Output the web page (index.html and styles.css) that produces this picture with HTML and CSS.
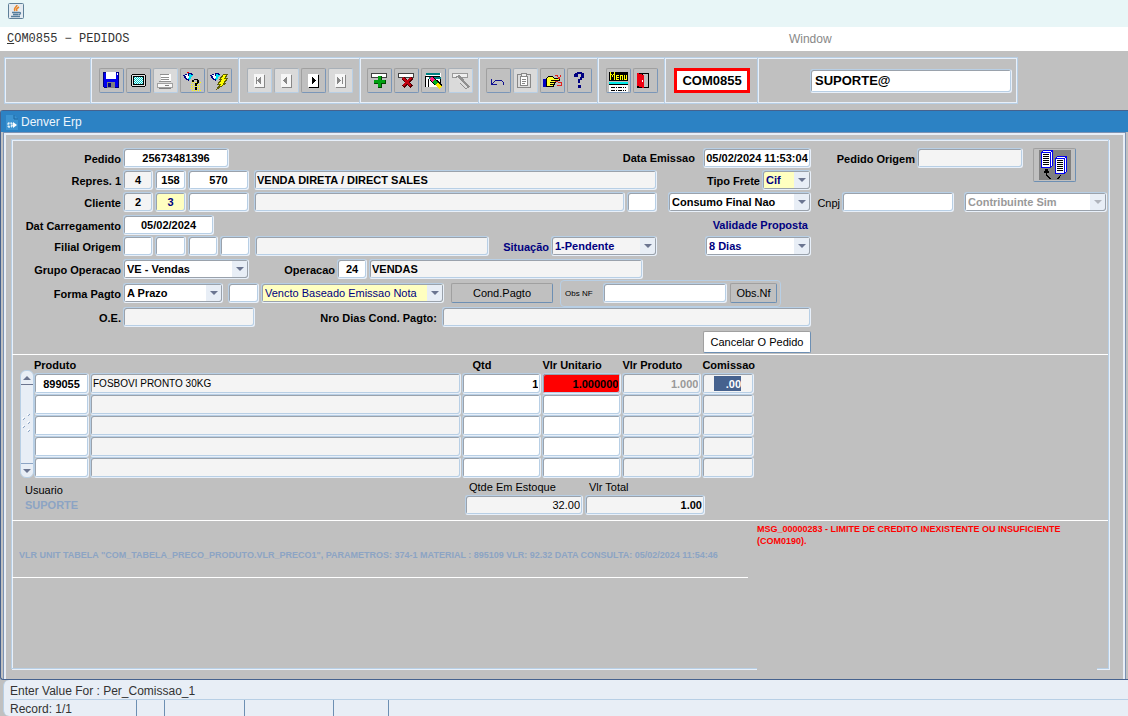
FILE: index.html
```
<!DOCTYPE html>
<html lang="pt-BR">
<head>
  <meta charset="UTF-8" />
  <meta name="viewport" content="width=device-width, initial-scale=1.0"/>
  <title>COM0855 - PEDIDOS</title>
  <link rel="stylesheet" href="styles.css">
</head>
<body>
  <header class="app-bar">
    <svg class="java-icon" viewBox="0 0 16 16">
      <rect x="0.5" y="0.5" width="15" height="15" rx="1" fill="#e4ebf1" stroke="#5f8099"/>
      <path d="M9 2C9 4 5 5 7 8M11 4C8.500 5.500 8 6 9 8" fill="none" stroke="#e8852a" stroke-width="1.500"/>
      <path d="M4 9.500h7M5 11.500h5.500M3 13.500h9M11 9.500q3 0 0 2.500" fill="none" stroke="#557d9c" stroke-width="1.300"/>
    </svg>
  </header>
  <nav class="menu-bar">
    <a class="menu-title" href="#"><u>C</u>OM0855 − PEDIDOS</a>
    <a class="menu-window" href="#">Window</a>
  </nav>

  <div class="toolbar-wrap">
    <div class="toolbar">
      <div class="tool-group lead"></div>
      <div class="tool-group">
        <button class="tool" aria-label="Salvar">
          <svg viewBox="0 0 24 24">
            <path d="M4 3h16v16H5l-1-1z" fill="#0000f0"/><path d="M4.500 18V3.500h15v15H5" fill="none" stroke="#000080"/>
            <path d="M7 3h10v7H7z" fill="#fff"/><path d="M8 13h8v6H8z" fill="#808080"/><path d="M9 14h3v4H9z" fill="#000080"/><path d="M18 4h1v2h-1z" fill="#fff"/>
          </svg>
        </button>
        <button class="tool" aria-label="Tela">
          <svg viewBox="0 0 24 24">
            <path d="M6 5h13v1h1v11h-1v1H6v-1H5V6h1z" fill="#000"/><path d="M6 6h13v11H6z" fill="#e0e0e0"/><path d="M7 7h11v9H7z" fill="#000"/><path d="M8 8h9v7H8z" fill="#f0ffff"/>
            <path d="M8 8.500h9M8 10.500h9M8 12.500h9M8 14.500h9" stroke="#00c8c8" stroke-dasharray="1 1"/><path d="M9 9.500h8M9 11.500h8M9 13.500h8" stroke="#00c8c8" stroke-dasharray="1 1"/>
          </svg>
        </button>
        <button class="tool" disabled aria-label="Imprimir">
          <svg viewBox="0 0 24 24">
            <path d="M8 5h10v8H8z" fill="#fff"/><path d="M7 5.500h9M8 8.500h8M8 10.500h8M6 12.500h12" stroke="#909090"/>
            <path d="M4.500 14.500h15v4h-15z" fill="#f8f8f8" stroke="#a0a0a0"/><path d="M12 16.500h4M6 19.500h12" stroke="#808080"/>
          </svg>
        </button>
        <button class="tool" aria-label="Entrar consulta">
          <svg viewBox="0 0 24 24">
            <path d="M12 13.500h9M11 15.500h10M11 17.500h10M11 19.500h10M12 21.500h9" stroke="#ffff00" stroke-dasharray="1 1"/>
            <path d="M3 6l7-2 3 1-4 7-3-1z" fill="#000080"/><path d="M9 5l4 1-3 5-2-1z" fill="#00e0f0"/><path d="M5 6l3-1 1 4-2 1z" fill="#fff"/><path d="M7 3h2v1H7z" fill="#f00"/>
            <path d="M12 11h2v-1h4v1h1v3h-1v1h-1v2h-2v-3h2v-3h-3v2h-2zM15 18h2v3h-2z" fill="#000"/>
          </svg>
        </button>
        <button class="tool" aria-label="Executar consulta">
          <svg viewBox="0 0 24 24">
            <path d="M3 6l7-2 3 1-4 7-3-1z" fill="#000080"/><path d="M9 5l4 1-3 5-2-1z" fill="#00e0f0"/><path d="M5 6l3-1 1 4-2 1z" fill="#fff"/>
            <path d="M16.500 5.500h4l-3 4h3l-4 5h2l-9 6 4-5h-3l4-5h-2z" fill="#ffff00" stroke="#606000"/>
          </svg>
        </button>
      </div>
      <div class="tool-group">
        <button class="tool" disabled aria-label="Primeiro"><svg viewBox="0 0 24 24"><path d="M7 5h10v13H7z" fill="#f6f6f6"/><path d="M17.500 6v12.500H8" fill="none" stroke="#888"/><path d="M9 8h1v7H9zM14 8v7l-4-3v-1z" fill="#888"/></svg></button>
        <button class="tool" disabled aria-label="Anterior"><svg viewBox="0 0 24 24"><path d="M7 5h10v13H7z" fill="#f6f6f6"/><path d="M17.500 6v12.500H8" fill="none" stroke="#888"/><path d="M13 8v7l-4-3v-1z" fill="#888"/></svg></button>
        <button class="tool" aria-label="Proximo"><svg viewBox="0 0 24 24"><path d="M7 5h10v13H7z" fill="#fff"/><path d="M17.500 6v12.500H8" fill="none" stroke="#000"/><path d="M11 8v7l4-3v-1z" fill="#000"/></svg></button>
        <button class="tool" disabled aria-label="Ultimo"><svg viewBox="0 0 24 24"><path d="M7 5h10v13H7z" fill="#f6f6f6"/><path d="M17.500 6v12.500H8" fill="none" stroke="#888"/><path d="M14 8h1v7h-1zM9 8v7l4-3v-1z" fill="#888"/></svg></button>
      </div>
      <div class="tool-group snug">
        <button class="tool" aria-label="Inserir registro"><svg viewBox="0 0 24 24"><path d="M4.500 4.500h15v4h-15z" fill="#fff" stroke="#404040"/><path d="M11 7h4v4h4v4h-4v4h-4v-4H7v-4h4z" fill="#004800"/><path d="M11 7h3v4h4v3h-4v4h-3v-4H7v-3h4z" fill="#00a010"/></svg></button>
        <button class="tool" aria-label="Excluir registro"><svg viewBox="0 0 24 24"><path d="M4.500 4.500h15v4h-15z" fill="#fff" stroke="#404040"/><path d="M9 9l9 9M18 9l-9 9" stroke="#500000" stroke-width="4"/><path d="M9 9l8 8M17 9l-8 8" stroke="#c00010" stroke-width="2"/></svg></button>
        <button class="tool" aria-label="Limpar bloco"><svg viewBox="0 0 24 24"><path d="M5 4h15v14H5z" fill="#fff"/><path d="M5 5h14M8 9h12" stroke="#008080" stroke-width="2"/><path d="M4.500 18V7.500h4M8 7.500h11M7.500 10v8M19.500 10v8" fill="none" stroke="#000"/><path d="M10 9l10 9" stroke="#000" stroke-width="5"/><path d="M10 9l3 3" stroke="#ff2080" stroke-width="4"/><path d="M13 12l3 3" stroke="#00b020" stroke-width="3"/><path d="M16 15l4 4" stroke="#ffe800" stroke-width="4"/></svg></button>
        <button class="tool" disabled aria-label="Limpar registro"><svg viewBox="0 0 24 24"><path d="M4.500 4.500h15v4h-15z" fill="#eee" stroke="#999"/><path d="M9 7l11 12" stroke="#909090" stroke-width="5"/><path d="M9 9l10 10" stroke="#ddd" stroke-width="2"/></svg></button>
      </div>
      <div class="tool-group snug">
        <button class="tool" aria-label="Desfazer"><svg viewBox="0 0 24 24"><path d="M5.500 10v5.500H11M6 15l4-4h5l2 2v3" fill="none" stroke="#101090"/></svg></button>
        <button class="tool" disabled aria-label="Colar"><svg viewBox="0 0 24 24"><path d="M4.500 5.500h13v13h-13z" fill="#ddd" stroke="#888"/><path d="M7.500 7.500h7v9h-7z" fill="#fff" stroke="#888"/><path d="M8.500 4.500h5v3h-5z" fill="#eee" stroke="#888"/><path d="M9 10.500h4M9 12.500h4M9 14.500h3" stroke="#888"/></svg></button>
        <button class="tool" aria-label="Lista de valores"><svg viewBox="0 0 24 24"><path d="M3 10h3v8H3z" fill="#0000c0"/><path d="M6 10l3-3h3l2 2h5v2h-4v2h-1v2h-1v2H6z" fill="#ffff30" stroke="#000"/><path d="M11 11.500h4M10 13.500h4M10 15.500h3" stroke="#000"/><path d="M15 6.500h2l2 3 2-3M15 12l3 1h3v3h-4" fill="none" stroke="#e02020"/></svg></button>
        <button class="tool" aria-label="Ajuda"><svg viewBox="0 0 24 24"><path d="M8 4h2V3h5v1h2v5h-2v2h-2v3h-2v-4h2V8h1V5h-3v3H7V5h1zM11 16h3v3h-3z" fill="#000080"/></svg></button>
      </div>
      <div class="tool-group">
        <button class="tool" aria-label="Menu"><svg viewBox="0 0 24 24"><path d="M3 3h19v9H3z" fill="#000"/><path d="M4.500 11V4l2 3 2-3v7M13 6.500h-2.500v4H13M11 8.500h2M14.500 11V6.500h2V11M18.500 6v4.500h2V6" fill="none" stroke="#ffff00"/><path d="M3 13h19v2H3z" fill="#00e8e8"/><path d="M3 16h19v7H3z" fill="#fff"/><path d="M3 15.500h19" stroke="#000"/><path d="M5 18.500h15M5 21.500h15" stroke="#000" stroke-dasharray="4 1 1 1"/></svg></button>
        <button class="tool" aria-label="Sair"><svg viewBox="0 0 24 24"><path d="M4 4h12v15H4z" fill="#000"/><path d="M10 5h5v13h-5z" fill="#c0c0c0"/><path d="M4 4l7 2v13l-7-2z" fill="#f00010"/><path d="M9 11h1v2H9z" fill="#fff"/></svg></button>
      </div>
      <div class="tool-group program">
        <output class="code">COM0855</output>
      </div>
      <div class="tool-group user">
        <input class="field user-name" aria-label="Conta" value="SUPORTE@">
      </div>
    </div>
  </div>

  <main class="window">
    <div class="window-title">
      <svg viewBox="0 0 12 16"><path d="M0 1h8l4 4v11H0z" fill="#3c94d2"/><path d="M8 1v4h4" fill="none" stroke="#1d679f"/><circle cx="4" cy="11" r="2" fill="none" stroke="#e4f2fb" stroke-width="2" stroke-dasharray="2 1"/><path d="M7 8l4 3-4 3z" fill="#fff"/></svg>
      Denver Erp
    </div>
    <div class="window-body">
      <form class="panel">
        <section class="order">
          <div class="rows">
            <div class="row">
              <label class="first" for="pedido">Pedido</label>
              <input class="field center w106" id="pedido" value="25673481396">
              <div class="right">
                <label class="spaced" for="emissao">Data Emissao</label>
                <input class="field center w108" id="emissao" value="05/02/2024 11:53:04">
              </div>
            </div>
            <div class="row">
              <label class="first" for="repres">Repres. 1</label>
              <input class="field center w30 locked" id="repres" value="4">
              <input class="field center w31" aria-label="Repres filial" value="158">
              <input class="field center w61" aria-label="Repres codigo" value="570">
              <input class="field grow locked" aria-label="Repres nome" value="VENDA DIRETA / DIRECT SALES">
              <div class="side">
                <label for="frete">Tipo Frete</label>
                <select class="field w49 yellow navy" id="frete"><option>Cif</option><option>Fob</option></select>
              </div>
            </div>
            <div class="row">
              <label class="first" for="cliente">Cliente</label>
              <input class="field center w30 locked" id="cliente" value="2">
              <input class="field center w31 yellow navy" aria-label="Cliente filial" value="3">
              <input class="field w61" aria-label="Cliente codigo">
              <input class="field grow locked" aria-label="Cliente nome">
              <input class="field w30" aria-label="Cliente UF">
              <div class="side">
                <select class="field w143" aria-label="Consumo final"><option>Consumo Final Nao</option><option>Consumo Final Sim</option></select>
              </div>
            </div>
            <div class="row">
              <label class="first" for="carregamento">Dat Carregamento</label>
              <input class="field center w91" id="carregamento" value="05/02/2024">
              <div class="right"><label class="navy" for="validade">Validade Proposta</label></div>
            </div>
            <div class="row">
              <label class="first" for="filial">Filial Origem</label>
              <input class="field w30" id="filial">
              <input class="field w31" aria-label="Filial origem 2">
              <input class="field w30" aria-label="Filial origem 3">
              <input class="field w30" aria-label="Filial origem 4">
              <input class="field grow locked" aria-label="Filial nome">
              <label class="navy status" for="situacao">Situação</label>
              <select class="field w106 locked navy" id="situacao"><option>1-Pendente</option></select>
              <div class="side">
                <select class="field w106 navy" id="validade"><option>8 Dias</option></select>
              </div>
            </div>
            <div class="row">
              <label class="first" for="grupo">Grupo Operacao</label>
              <select class="field w126" id="grupo"><option>VE - Vendas</option></select>
              <label class="operation" for="operacao">Operacao</label>
              <input class="field center w30" id="operacao" value="24">
              <input class="field operation-name locked" aria-label="Operacao nome" value="VENDAS">
            </div>
            <div class="row">
              <label class="first" for="forma">Forma Pagto</label>
              <select class="field w100" id="forma"><option>A Prazo</option></select>
              <input class="field w31 term" aria-label="Condicao">
              <select class="field grow-select yellow navy plain" aria-label="Vencimento"><option>Vencto Baseado Emissao Nota</option></select>
              <button class="btn cond" type="button">Cond.Pagto</button>
              <div class="obs">
                <label class="tiny" for="obs">Obs NF</label>
                <input class="field w124" id="obs">
                <button class="btn w47" type="button">Obs.Nf</button>
              </div>
            </div>
            <div class="row">
              <label class="first" for="oe">O.E.</label>
              <input class="field w132 locked" id="oe">
              <label class="days" for="dias">Nro Dias Cond. Pagto:</label>
              <input class="field grow locked" id="dias">
            </div>
            <div class="row">
              <button class="btn cancel right" type="button">Cancelar O Pedido</button>
            </div>
          </div>
          <div class="rows">
            <div class="row">
              <label class="origin" for="origem">Pedido Origem</label>
              <input class="field w106 locked" id="origem">
              <button class="copy" type="button" aria-label="Copiar pedido">
                <svg viewBox="0 0 32 30">
                  <path d="M0 0h32v30H0z" fill="#808080"/>
                  <path d="M2.500 2.500l2-2h9v15l-2 2h-9z" fill="#fff" stroke="#0000f0"/><path d="M2.500 2.500h9v15M11.500 2.500l2-2" fill="none" stroke="#0000f0"/>
                  <path d="M4 4.500h6M4 6.500h6M4 8.500h6M4 10.500h6M4 12.500h6M4 14.500h6" stroke="#000"/>
                  <path d="M16.500 8.500l2-2h9v15l-2 2h-9z" fill="#fff" stroke="#0000f0"/><path d="M16.500 8.500h9v15M25.500 8.500l2-2" fill="none" stroke="#0000f0"/>
                  <path d="M18 10.500h6M18 12.500h6M18 14.500h6M18 16.500h6M18 18.500h6M18 20.500h6" stroke="#000"/>
                  <path d="M5 21h5v2H5zM6 19h3v2H6z"/><path d="M7.500 23v2l4 4M21.500 25l-1 2-2 2" fill="none" stroke="#000"/>
                </svg>
              </button>
            </div>
            <div class="row third">
              <label class="cnpj" for="cnpj">Cnpj</label>
              <input class="field w112" id="cnpj">
              <select class="field w143 right" aria-label="Contribuinte" disabled><option>Contribuinte Sim</option></select>
            </div>
          </div>
        </section>

        <section class="items">
          <div class="scrollbar">
            <button type="button" aria-label="Subir"><svg viewBox="0 0 8 4"><path d="M0 4l4-4 4 4z"/></svg></button>
            <svg class="grip" viewBox="0 0 10 20"><path d="M1 6l2-2M6 2l2-2M6 10l2-2M1 14l2-2M6 18l2-2" stroke="#8ca4c4"/><path d="M0 5l2-2M5 1l2-2M5 9l2-2M0 13l2-2M5 17l2-2" stroke="#fff"/></svg>
            <button type="button" aria-label="Descer"><svg viewBox="0 0 8 4"><path d="M0 0l4 4 4-4z"/></svg></button>
          </div>
          <table>
            <colgroup><col class="c-code"><col><col class="c-qty"><col class="c-qty"><col class="c-qty"><col class="c-fee"></colgroup>
            <thead>
              <tr><th colspan="2">Produto</th><th class="qty">Qtd</th><th>Vlr Unitario</th><th>Vlr Produto</th><th>Comissao</th></tr>
            </thead>
            <tbody id="items"></tbody>
          </table>
        </section>

        <section class="totals">
          <div class="account">
            <span>Usuario</span>
            <b>SUPORTE</b>
          </div>
          <div class="total stock">
            <label for="estoque">Qtde Em Estoque</label>
            <input class="field num plain locked" id="estoque" value="32.00">
          </div>
          <div class="total">
            <label for="total">Vlr Total</label>
            <input class="field num locked" id="total" value="1.00">
          </div>
        </section>

        <section class="messages">
          <div class="trace">
            <p>VLR UNIT TABELA "COM_TABELA_PRECO_PRODUTO.VLR_PRECO1", PARAMETROS: 374-1 MATERIAL : 895109 VLR: 92.32 DATA CONSULTA: 05/02/2024 11:54:46</p>
          </div>
          <p class="alert">MSG_00000283 - LIMITE DE CREDITO INEXISTENTE OU INSUFICIENTE (COM0190).</p>
        </section>
      </form>
    </div>
  </main>

  <footer class="status-bar">
    <div class="hint">Enter Value For : Per_Comissao_1</div>
    <div class="cells">
      <span class="s-record">Record: 1/1</span><span class="s-a"></span><span class="s-b"></span><span class="s-c"></span><span class="s-d"></span>
    </div>
  </footer>

  <script>
    const items = [
      ['899055', 'FOSBOVI PRONTO 30KG', '1', '1.000000', '1.000', '.00'],
      [], [], [], []
    ];
    const columns = [
      ['Produto', 'center'],
      ['Descricao', 'locked desc'],
      ['Qtd', 'num'],
      ['Vlr Unitario', 'num price'],
      ['Vlr Produto', 'num locked gray'],
      ['Comissao', 'num locked fee']
    ];

    const body = document.getElementById('items');
    items.forEach((item, i) => {
      const row = body.insertRow();
      if (i === 0) row.className = 'current';
      columns.forEach(([name, style], j) => {
        const input = document.createElement('input');
        input.className = `field ${style}`;
        input.value = item[j] || '';
        input.setAttribute('aria-label', `${name} ${i + 1}`);
        row.insertCell().append(input);
      });
    });
  </script>
</body>
</html>
```
FILE: styles.css
```
* {
  box-sizing: border-box;
  margin: 0;
  padding: 0;
}

body {
  display: flex;
  flex-direction: column;
  min-height: 100vh;
  background: #c0c0c0;
  color: #000;
  font-family: 'Liberation Sans', Arial, sans-serif;
  font-size: 11px;
}

input,
select,
button {
  font-family: inherit;
  font-size: inherit;
  color: inherit;
}

svg {
  display: block;
}

/* top bars */
.app-bar {
  height: 27px;
  padding: 3px 8px;
  background: #e8f6f7;
}

.java-icon {
  width: 16px;
  height: 16px;
}

.menu-bar {
  display: flex;
  align-items: center;
  height: 24px;
  padding: 0 4px 0 7px;
  background: #fff;
}

.menu-bar a {
  flex: 1;
  font-size: 12px;
  text-decoration: none;
}

.menu-bar .menu-title {
  flex: 0 0 70%;
  color: #333;
  font-family: 'Liberation Mono', monospace;
}

.menu-bar .menu-window {
  color: #888;
}

/* toolbar */
.toolbar-wrap {
  padding: 6px 4px;
}

.toolbar {
  display: flex;
  width: 1014px;
  max-width: 100%;
  height: 47px;
  border: 1px solid #b8cfe5;
  box-shadow: inset 1px 1px 0 #e8f0fa, inset -1px -1px 0 #e8f0fa;
}

.tool-group {
  display: flex;
  align-items: center;
  gap: 2px;
  padding: 0 7px;
  border-right: 1px solid #e8f0fa;
  box-shadow: inset -1px 0 0 #b8cfe5;
}

.tool-group.snug {
  padding: 0 6px;
}

.tool-group.program {
  padding: 0 8px;
}

.tool-group.lead {
  width: 87px;
}

.tool-group.user {
  flex: 1;
  justify-content: flex-end;
  border: 0;
  padding: 0 5px;
  box-shadow: none;
}

.tool {
  width: 25px;
  height: 25px;
  border: 1px solid;
  border-color: #a0a0a0 #7a96b8 #7a96b8 #a0a0a0;
  border-radius: 2px;
  background: #c0c0c0;
}

.tool:disabled {
  border-color: #a8b0b8 #b8cfe5 #b8cfe5 #a8b0b8;
  background: #dadada;
}

.tool svg {
  width: 24px;
  height: 24px;
  margin: -1px;
  shape-rendering: crispEdges;
}

.code {
  width: 76px;
  border: 3px solid #f00;
  background: #fff;
  font-size: 13px;
  font-weight: bold;
  line-height: 19px;
  text-align: center;
}

.user-name.field {
  width: 202px;
  height: 24px;
  padding: 0 4px;
  font-size: 13px;
}

/* window frame */
.window {
  flex: 1;
  display: flex;
  flex-direction: column;
  border: 1px solid #46628e;
  border-width: 1px 0 1px 1px;
  border-radius: 3px 0 0 3px;
}

.window-title {
  display: flex;
  align-items: center;
  gap: 3px;
  height: 21px;
  padding-left: 5px;
  background: #2c82c4;
  color: #eef6fc;
  font-size: 12px;
}

.window-title svg {
  width: 12px;
  height: 16px;
}

.window-body {
  flex: 1;
  display: flex;
  margin: 0 2px 0 2px;
  padding: 6px 16px 10px 7px;
  border: 1px solid #7c93b4;
  border-bottom: 0;
  box-shadow: inset 2px 2px 0 #e8eef6, inset -2px 0 0 #e8eef6;
}

.panel {
  flex: 1;
  display: flex;
  flex-direction: column;
  min-width: 0;
  border: 1px solid #b8cfe5;
  box-shadow: 1px 1px 0 #e8f0fa, inset 1px 1px 0 #e8f0fa;
}

/* fields */
.field {
  flex: none;
  height: 20px;
  padding: 0 2px;
  border: 1px solid;
  border-color: #b8cfe5 #e8f0fa #e8f0fa #b8cfe5;
  border-radius: 3px;
  background-color: #fff;
  box-shadow: inset 1px 1px 0 #9aa2ac, inset -1px -1px 0 #b8cfe5;
  font-weight: bold;
  min-width: 0;
  outline: none;
}

select.field {
  appearance: none;
  padding-left: 3px;
  background-image: url("data:image/svg+xml,%3Csvg xmlns='http://www.w3.org/2000/svg' width='15' height='16'%3E%3Cpath d='M0 0h15v16H0z' fill='%23e8eef6'/%3E%3Cpath d='M4 6h8L8 10z' fill='%236b7590'/%3E%3C/svg%3E");
  background-position: right 1px center;
  background-repeat: no-repeat;
  box-shadow: inset 1px 1px 0 #9aa2ac, inset -1px -1px 0 #9aa2ac;
}

select.field:disabled {
  background-image: url("data:image/svg+xml,%3Csvg xmlns='http://www.w3.org/2000/svg' width='15' height='16'%3E%3Cpath d='M0 0h15v16H0z' fill='%23e8eef6'/%3E%3Cpath d='M4 6h8L8 10z' fill='%23b0b4bc'/%3E%3C/svg%3E");
  color: #999;
  opacity: 1;
}

.center { text-align: center; }
.num { text-align: right; }
.locked { background-color: #f4f4f4; }
.yellow { background-color: #ffffc0; }
.navy { color: #000080; }
.gray { color: #999; }
.field.plain { font-weight: normal; }

.w30 { width: 30px; }
.w31 { width: 31px; }
.w47 { width: 47px; }
.w49 { width: 49px; }
.w61 { width: 61px; }
.w91 { width: 91px; }
.w100 { width: 100px; }
.w106 { width: 106px; }
.w108 { width: 108px; }
.w112 { width: 112px; }
.w124 { width: 124px; }
.w126 { width: 126px; }
.w132 { width: 132px; }
.w143 { width: 143px; }

.btn {
  height: 20px;
  border: 1px solid;
  border-color: #a0a0a0 #6d8fb3 #6d8fb3 #a0a0a0;
  border-radius: 2px;
  background: #c0c0c0;
}

/* order header */
.order {
  display: grid;
  grid-template-columns: minmax(0, 1fr) 296px;
  padding: 8px 1px 0 0;
  border-bottom: 1px solid #fff;
}

.rows {
  display: grid;
  grid-template-rows: 22px 22px 23px 21px 23px 24px 24px 25px 22px;
}

.row {
  display: flex;
  align-items: center;
  gap: 2px;
  height: 20px;
  font-weight: bold;
  white-space: nowrap;
}

.row.third {
  grid-row: 3;
}

.row label {
  padding-top: 1px;
}

.first {
  width: 109px;
  text-align: right;
}

.grow {
  flex: 1;
  margin-left: 3px;
}

.right {
  margin-left: auto;
}

.row .right label.navy {
  padding-right: 3px;
}

.side {
  display: flex;
  align-items: center;
  justify-content: flex-end;
  gap: 2px;
  width: 152px;
}

.row .spaced {
  padding-right: 5px;
}

.status {
  padding-left: 12px;
}

.operation {
  width: 84px;
  text-align: right;
}

.operation-name {
  width: 274px;
}

.term {
  margin-left: 3px;
}

.grow-select {
  flex: 1;
}

.cond {
  width: 102px;
  margin: 0 5px;
}

.obs {
  display: flex;
  align-items: center;
  gap: 3px;
  height: 27px;
  margin-right: 30px;
  padding: 0 3px 0 4px;
  border: 1px solid #b8cfe5;
  border-radius: 4px;
}

.tiny {
  width: 35px;
  font-size: 8px;
  font-weight: normal;
}

.days {
  width: 180px;
  text-align: right;
}

.btn.cancel {
  width: 108px;
  height: 22px;
  background: #fff;
}

.origin {
  width: 104px;
  text-align: right;
}

.cnpj {
  width: 29px;
  text-align: right;
  font-weight: normal;
}

.copy {
  align-self: flex-start;
  width: 43px;
  height: 34px;
  margin-left: 8px;
  border: 1px solid;
  border-color: #a0a0a0 #6d8fb3 #6d8fb3 #a0a0a0;
  border-radius: 2px;
  background: #c0c0c0;
}

.copy svg {
  width: 32px;
  height: 30px;
  margin: 0 auto;
  shape-rendering: crispEdges;
}

/* items grid */
.items {
  display: flex;
  align-items: flex-end;
  padding: 2px 353px 0 8px;
}

.scrollbar {
  display: flex;
  flex-direction: column;
  justify-content: space-between;
  align-items: center;
  width: 14px;
  height: 108px;
  border: 1px solid #b8cfe5;
  border-radius: 6px;
  background: #e8eef6;
}

.scrollbar button {
  width: 100%;
  height: 14px;
  border: 0;
  background: none;
  border-bottom: 1px solid #6b7590;
}

.scrollbar button:last-child {
  border-bottom: 0;
  border-top: 1px solid #8ca4c4;
}

.scrollbar button svg {
  width: 8px;
  height: 4px;
  margin: 0 auto;
  fill: #6b7590;
}

.scrollbar .grip {
  width: 10px;
  height: 20px;
}

table {
  flex: 1;
  min-width: 0;
  border-collapse: collapse;
  table-layout: fixed;
}

.c-code { width: 56px; }
.c-qty { width: 80px; }
.c-fee { width: 52px; }

th {
  height: 16px;
  text-align: left;
  white-space: nowrap;
}

th.qty {
  padding-left: 10px;
}

td {
  height: 21px;
}

td .field {
  display: block;
  width: calc(100% - 1px);
  height: 21px;
}

.field.desc {
  font-size: 10px;
  font-weight: normal;
}

.current .price {
  background-color: #f00;
}

.current .fee {
  padding: 2px 12px 2px 11px;
  background: linear-gradient(#46628e, #46628e) content-box, #f4f4f4;
  color: #fff;
}

/* totals */
.totals {
  display: flex;
  justify-content: flex-end;
  gap: 2px;
  padding: 2px 403px 5px 13px;
  border-bottom: 1px solid #fff;
}

.account {
  display: flex;
  flex-direction: column;
  gap: 3px;
  margin-right: auto;
  padding-top: 4px;
}

.account b {
  color: #8ca4c4;
}

.total {
  display: flex;
  flex-direction: column;
  width: 120px;
}

.total.stock {
  width: 118px;
}

.total label {
  padding-left: 4px;
  line-height: 15px;
}

/* messages */
.messages {
  flex: 1;
  display: flex;
  font-size: 9px;
  font-weight: bold;
}

.trace {
  flex: 1;
  min-width: 0;
}

.trace p {
  height: 57px;
  margin-right: 9px;
  padding: 29px 0 0 7px;
  border-bottom: 1px solid #fff;
  color: #8ca4c4;
  white-space: nowrap;
}

/* background runs over the panel's bottom border */
.alert {
  width: 340px;
  margin: 0 11px -2px 0;
  padding-top: 2px;
  background: #c0c0c0;
  color: #f00;
  line-height: 12px;
}

/* status bar */
.status-bar {
  margin-left: 3px;
  padding: 1px 0 0 6px;
  border: 1px solid #b8cfe5;
  border-width: 0 0 0 1px;
  border-radius: 6px 0 0 6px;
  background: #e8eef6;
  color: #333;
  font-size: 12px;
}

.hint {
  height: 19px;
  border-bottom: 1px solid #b8cfe5;
  line-height: 20px;
}

.cells {
  display: flex;
  height: 16px;
  line-height: 18px;
}

.cells span {
  border-right: 1px solid #6d8fb3;
}

.s-record { width: 127px; }
.s-a { width: 28px; }
.s-b { width: 80px; }
.s-c { width: 89px; }
.s-d { width: 55px; }
```
